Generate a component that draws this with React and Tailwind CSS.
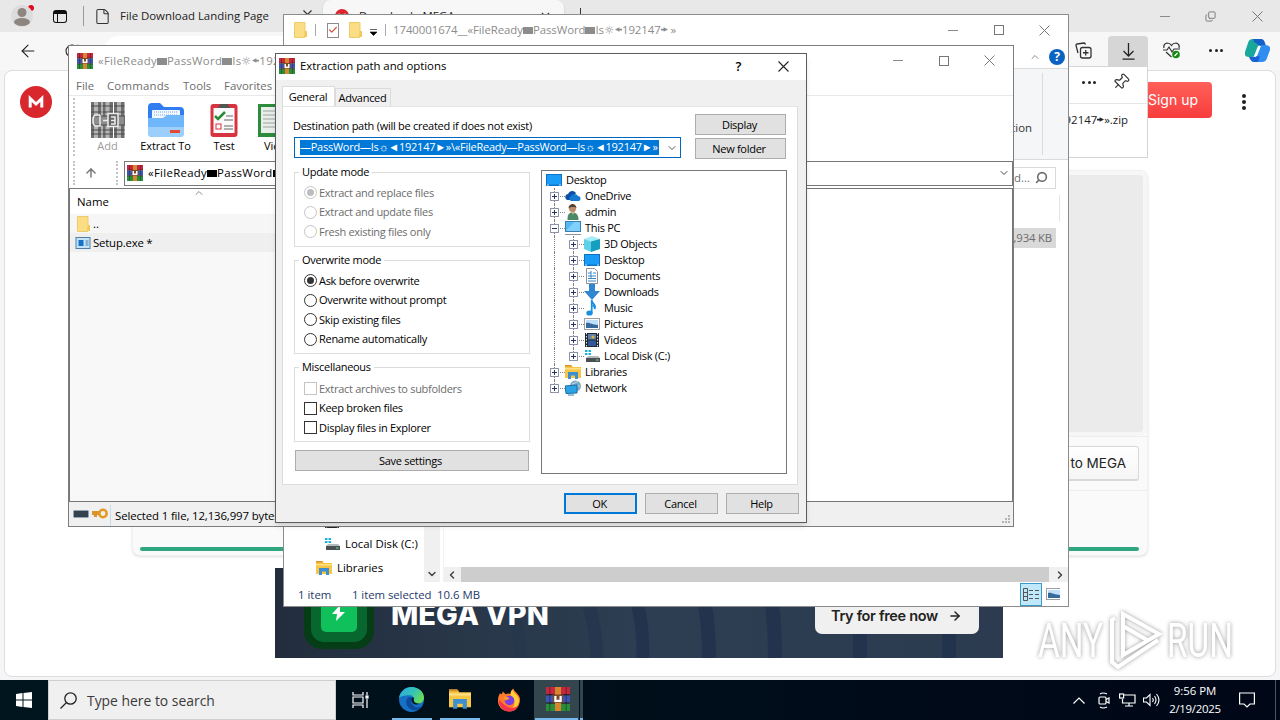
import {
  ArrowLeft, ArrowRight, ArrowUp, Check, ChevronDown, ChevronLeft, ChevronRight, ChevronUp,
  Copy, File, Pin, RotateCw, Search, X,
} from 'lucide-react';

const MENU = [
  { label: 'File', cls: 'w-[31px]' },
  { label: 'Commands', cls: 'w-[76px] tracking-[0.2px]' },
  { label: 'Tools', cls: 'w-[41px]' },
  { label: 'Favorites', cls: 'w-[60px]' },
];

const UPDATE = ['Extract and replace files', 'Extract and update files', 'Fresh existing files only'];
const OVERWRITE = ['Ask before overwrite', 'Overwrite without prompt', 'Skip existing files', 'Rename automatically'];
const MISC = ['Extract archives to subfolders', 'Keep broken files', 'Display files in Explorer'];

const TREE = [
  { label: 'Desktop', level: 0, icon: DesktopIcon },
  { label: 'OneDrive', level: 1, icon: CloudIcon },
  { label: 'admin', level: 1, icon: UserIcon },
  { label: 'This PC', level: 1, icon: PcIcon, open: true },
  { label: '3D Objects', level: 2, icon: CubeIcon },
  { label: 'Desktop', level: 2, icon: DesktopIcon },
  { label: 'Documents', level: 2, icon: DocumentIcon },
  { label: 'Downloads', level: 2, icon: DownloadIcon },
  { label: 'Music', level: 2, icon: MusicIcon },
  { label: 'Pictures', level: 2, icon: PictureIcon },
  { label: 'Videos', level: 2, icon: VideoIcon },
  { label: 'Local Disk (C:)', level: 2, icon: DiskIcon, last: true },
  { label: 'Libraries', level: 1, icon: LibraryIcon },
  { label: 'Network', level: 1, icon: NetworkIcon, last: true },
];

/* ---------- icons ---------- */

function DesktopIcon() {
  return (
    <svg width="16" height="16" viewBox="0 0 16 16">
      <rect x="0" y="2" width="16" height="12" fill="#0b74c9" />
      <rect x="1" y="3" width="14" height="9.500" fill="#1a9bf5" />
      <path d="M1 13h2M13 13h2" stroke="#bfe3ff" />
    </svg>
  );
}

function CloudIcon() {
  return (
    <svg width="16" height="16" viewBox="0 0 16 16">
      <path d="M1 11a3 3 0 0 1 2-5 4.500 4.500 0 0 1 8-1l-5 7H2z" fill="#0a4fa5" />
      <path d="M6 13a2.700 2.700 0 0 1 0-5 4 4 0 0 1 7 0 2.600 2.600 0 0 1 1 5z" fill="#1479d0" />
    </svg>
  );
}

function UserIcon() {
  return (
    <svg width="16" height="16" viewBox="0 0 16 16">
      <path d="M2.500 16c0-5 1-7.500 5-7.500s6 2.500 6 7.500z" fill="#4c8a67" />
      <path d="M6 7h4l-2 4z" fill="#d9b08c" />
      <circle cx="7.500" cy="4.500" r="3.500" fill="#b98b6a" />
      <path d="M3.500 4.500c0-6 8-6 8 0L10 3H6z" fill="#54402f" />
    </svg>
  );
}

function PcIcon() {
  return (
    <svg width="16" height="16" viewBox="0 0 16 16">
      <rect x="0.500" y="1.500" width="15" height="10" fill="#57b7f2" stroke="#3c7fae" />
      <path d="M1 11L9 2h6v9z" fill="#7fd0fb" />
      <path d="M0 14.500h16" stroke="#8b949c" />
    </svg>
  );
}

function CubeIcon() {
  return (
    <svg width="16" height="16" viewBox="0 0 16 16">
      <path d="M0 3l8-3 8 3-8 3z" fill="#a6ecf7" />
      <path d="M0 3l7 2.500V16l-7-3z" fill="#5fd0e6" />
      <path d="M7 5.500L16 3v10l-9 3z" fill="#159fbe" />
    </svg>
  );
}

function DocumentIcon() {
  return (
    <svg width="16" height="16" viewBox="0 0 16 16">
      <path d="M2.500 0.500h8l3 3v12h-11z" fill="#fff" stroke="#8d9499" />
      <path d="M4 5h3M9 5h3M4 8h8M4 10.500h8M4 13h8M7 3v8" stroke="#3489c9" />
    </svg>
  );
}

function DownloadIcon() {
  return (
    <svg width="16" height="16" viewBox="0 0 16 16">
      <path d="M5 0h6v7h5l-8 9-8-9h5z" fill="#2f86d3" />
    </svg>
  );
}

function MusicIcon() {
  return (
    <svg width="16" height="16" viewBox="0 0 16 16">
      <ellipse cx="5.500" cy="13" rx="3.200" ry="2.600" fill="#158fe0" />
      <path d="M7.700 13V0c0 4 5 4 3 9 0-3-2-3.500-2-3.500" fill="none" stroke="#158fe0" strokeWidth="1.700" />
    </svg>
  );
}

function PictureIcon() {
  return (
    <svg width="16" height="16" viewBox="0 0 16 16">
      <rect x="0.500" y="2.500" width="15" height="11" fill="#fff" stroke="#9aa0a5" />
      <rect x="2" y="4" width="12" height="8" fill="#bfe0fa" />
      <path d="M2 7c3-1 6 2 12 2v3H2z" fill="#37699a" />
    </svg>
  );
}

function VideoIcon() {
  return (
    <svg width="16" height="16" viewBox="0 0 16 16">
      <rect x="1" y="1" width="14" height="14" fill="#23282d" />
      <rect x="4" y="2" width="8" height="5.500" fill="#5f7fae" />
      <rect x="4" y="8.500" width="8" height="5.500" fill="#31589a" />
      <circle cx="9" cy="5" r="1.600" fill="#d9b53a" />
      <path d="M2.500 1v14M13.500 1v14" stroke="#e6e9ec" strokeDasharray="1.500 1.500" />
    </svg>
  );
}

function DiskIcon() {
  return (
    <svg width="16" height="16" viewBox="0 0 16 16">
      <path d="M1 2h2.500v2H1zM4.500 2H7v2H4.500zM1 5h2.500v2H1zM4.500 5H7v2H4.500z" fill="#19b3d8" />
      <path d="M2 10l2-2h10l2 2z" fill="#b4b9bc" />
      <rect x="2" y="10" width="14" height="4" fill="#4a5054" />
      <rect x="12" y="11.500" width="2.500" height="1" fill="#6fe089" />
    </svg>
  );
}

function LibraryIcon({ size = 16 }) {
  return (
    <svg width={size} height={size} viewBox="0 0 16 16">
      <path d="M0 1h6l1.500 2H16v11H0z" fill="#f6c644" />
      <path d="M0 1h6l1.500 1.500H0z" fill="#d9912a" />
      <path d="M0 4h16v1.500H0z" fill="#ffdf86" />
      <path d="M3 8h10v7h-3v-3.500H6V15H3z" fill="#3d8fd1" />
    </svg>
  );
}

function NetworkIcon() {
  return (
    <svg width="16" height="16" viewBox="0 0 16 16">
      <circle cx="10.500" cy="6" r="5.500" fill="#7aa9c4" />
      <path d="M7 4c3 0 4-3 6-2M9 8c3 0 3-3 6-2" stroke="#c9e2ef" fill="none" />
      <path d="M0 6l12-1v8L1 13.500z" fill="#29a3e6" stroke="#1b6fa6" />
      <path d="M3 15h6" stroke="#2b7fb5" />
    </svg>
  );
}

function RarIcon({ size = 16 }) {
  return (
    <svg width={size} height={size} viewBox="0 0 16 16">
      <rect x="0" y="0" width="16" height="5" fill="#c2283f" />
      <rect x="0" y="5.500" width="16" height="5" fill="#3b56b5" />
      <rect x="0" y="11" width="16" height="5" fill="#2b8c3c" />
      <path d="M0 5.200h16M0 10.700h16" stroke="#2b1a1a" strokeWidth="0.700" />
      <path d="M2.500 0v16M13.500 0v16" stroke="#000" strokeOpacity="0.250" />
      <rect x="6" y="0" width="4" height="16" fill="#d8862b" />
      <rect x="4.500" y="5" width="7" height="5.500" fill="#7a4a2a" />
      <path d="M5.500 10V6h1.500v2.500h2V6h1.500v4z" fill="#fff" />
    </svg>
  );
}

function FolderIcon() {
  return (
    <svg width="14" height="16" viewBox="0 0 14 16">
      <path d="M0.500 0.500h10.500v13.500l-0.500 1.500H0.500z" fill="#fbdd85" stroke="#eccb69" />
      <path d="M11 9h2v6h-3z" fill="#f3ca5a" />
    </svg>
  );
}

function BooksIcon() {
  return (
    <svg width="34" height="36" viewBox="0 0 34 36">
      {[0, 11.500, 23].map((x) => (
        <g key={x}>
          <rect x={x} y="0" width="10.500" height="36" fill="#6f6f6f" />
          <rect x={x + 3} y="0" width="4" height="36" fill="#b5b5b5" />
          <path d={`M${x} 4h10.500M${x} 10h10.500M${x} 28h10.500M${x} 32h10.500`} stroke="#4a4a4a" />
        </g>
      ))}
      <rect x="0" y="14" width="34" height="9" fill="#8d8d8d" stroke="#4d4d4d" />
      <rect x="17" y="11.500" width="10" height="13" fill="#666" stroke="#ededed" strokeWidth="1.500" />
      <path d="M9 13H5q-3 0-3 5.500T5 24h4V13M12 18.500h5M20 15h4v7h-4M20 18.500h4" fill="none" stroke="#ededed" strokeWidth="1.500" />
    </svg>
  );
}

function BlueFolderIcon() {
  return (
    <svg width="36" height="36" viewBox="0 0 36 36">
      <path d="M0 5q0-4 4-4h8l4 4h16q4 0 4 4v20H0z" fill="#2f7df0" />
      <rect x="4" y="8" width="28" height="14" rx="1" fill="#f2f8ff" />
      <path d="M6 10h24M6 13h24" stroke="#7aa7d8" strokeDasharray="1 1" />
      <path d="M0 16h15l4-3h17v18q0 4-4 4H4q-4 0-4-4z" fill="#6fb7fa" />
      <path d="M0 25h36v6q0 4-4 4H4q-4 0-4-4z" fill="#9ccffc" />
      <rect x="22" y="28" width="10" height="3" fill="#e24a34" />
    </svg>
  );
}

function TestIcon() {
  return (
    <svg width="28" height="36" viewBox="0 0 28 36">
      <rect x="0.500" y="2" width="27" height="33" rx="3" fill="#d8333f" />
      <rect x="3.500" y="6" width="21" height="25" fill="#fafafa" />
      <path d="M8 6l2-4h8l2 4z" fill="#555" />
      <path d="M5 14l3 3 7-7" fill="none" stroke="#2b8a36" strokeWidth="2.500" />
      <path d="M16 14h7M14 18h9M14 24h9M14 27h9" stroke="#666" />
      <rect x="6" y="22" width="5" height="5" fill="none" stroke="#d8333f" />
    </svg>
  );
}

function ViewIcon() {
  return (
    <svg width="36" height="36" viewBox="0 0 36 36">
      <path d="M0 2h36v33H0z" fill="#2c8c3c" />
      <path d="M3 5h30v26H3z" fill="#e9eeea" />
      <path d="M5 9h26M5 13h26M5 17h26M5 21h26M5 25h26" stroke="#9aa39c" />
    </svg>
  );
}

function EdgeIcon() {
  return (
    <svg width="25" height="25" viewBox="0 0 24 24">
      <defs>
        <linearGradient id="edgeTop" x1="0" y1="0" x2="1" y2="0.500">
          <stop offset="0" stopColor="#2aa7e6" />
          <stop offset="0.600" stopColor="#35c4b4" />
          <stop offset="1" stopColor="#67dc5a" />
        </linearGradient>
      </defs>
      <circle cx="12" cy="12" r="12" fill="#1670c4" />
      <path d="M0 11C1 4 6 0 12 0c7 0 12 5 12 10 0 4-3 6-6 6s-5-1-4-3c1-3-1-5-4-5C5 8 1 9 0 11z" fill="url(#edgeTop)" />
      <path d="M9 10c-4 3-2 10 4 12 4 1 8-1 10-4-3 2-7 2-9 0s-3-3-2-5c1-3-1-4-3-3z" fill="#0d4a9c" />
      <path d="M12 12c0 4 4 6 8 4-3 0-6-1-6-4 1-3-2-3-2 0z" fill="#03141c" />
    </svg>
  );
}

function FirefoxIcon() {
  return (
    <svg width="23" height="24" viewBox="0 0 24 24">
      <path d="M2 5l2 1 1-3 3 3c2-1 4-1 5 0 0-3 1-4 3-6 1 4 6 5 7 11 0 7-4 13-11 13S0 19 0 13c0-4 1-6 2-8z" fill="#ff7a2b" />
      <path d="M15 1c1 4 7 6 7 12-1 5-4 8-8 9 5-5 4-12-1-15 0-3 1-4 2-6z" fill="#ffcf3a" />
      <path d="M1 12c0 7 5 12 11 12 5 0 8-3 9-6-4 3-9 3-13 0S2 12 1 12z" fill="#f5344f" />
      <circle cx="12" cy="12.500" r="5" fill="#7a3fe0" />
      <path d="M6 9c3-1 5 0 6 2-2 0-3 2-5 1z" fill="#ff9a2e" />
    </svg>
  );
}

function CopilotIcon() {
  return (
    <svg width="25" height="23" viewBox="0 0 25 23">
      <path d="M8 0h8l-5 15q-1 3-4 3H4q-5 0-4-5L3 4q1-4 5-4z" fill="#18a89b" />
      <path d="M8 0h8q3 0 4 4l1 3h-6L9 3z" fill="#1560c8" />
      <path d="M17 6h3q6 0 5 5l-3 8q-1 4-5 4H9l5-13q1-4 3-4z" fill="#2f8df2" />
      <path d="M4 18h6l5-1-2 6H9q-3 0-5-5z" fill="#1b5fd6" />
      <path d="M13 7l3 0-4 10-3 0z" fill="#fff" />
    </svg>
  );
}

function MegaIcon({ size }) {
  return (
    <svg width={size} height={size} viewBox="0 0 32 32" className="shrink-0">
      <circle cx="16" cy="16" r="16" fill="#d9272e" />
      <path d="M10.200 21.500v-9l5.800 5.500 5.800-5.500v9" fill="none" stroke="#fff" strokeWidth="3" />
    </svg>
  );
}

/* ---------- small shared parts ---------- */

function WindowButtons({ className }) {
  return (
    <div className={`flex items-center ${className}`}>
      <span className="w-[10px] h-px bg-[#8a8a8a]" />
      <span className="w-[10px] h-[10px] border border-[#777] ml-[36px]" />
      <svg width="11" height="11" viewBox="0 0 11 11" className="ml-[35px]">
        <path d="M0.500 0.500l10 10M10.500 0.500l-10 10" stroke="#777" />
      </svg>
    </div>
  );
}

function Dots({ vertical }) {
  return (
    <span className={`flex justify-between items-center ${vertical ? 'flex-col h-[16px]' : 'w-[14px]'}`}>
      {[0, 1, 2].map((i) => (
        <span key={i} className={`rounded-full bg-[#222] ${vertical ? 'w-1 h-1' : 'w-[3px] h-[3px]'}`} />
      ))}
    </span>
  );
}

function PushButton({ children, className }) {
  return (
    <button className={`h-[21px] bg-[#e1e1e1] flex items-center justify-center ${className}`}>{children}</button>
  );
}

// box and arrow glyphs of the archive name
function Block() {
  return <span className="inline-block w-[10px] h-[7px] bg-current" />;
}

function Arrow({ flip }) {
  return (
    <svg width="7" height="5" viewBox="0 0 8 5" className={`inline-block align-[2px] fill-current ${flip ? '-scale-x-100' : ''}`}>
      <path d="M0 2.500L5 0v1.500h3v2H5V5z" />
    </svg>
  );
}

function Sun() {
  return <span className="inline-block w-[11px] text-center -indent-px">☼</span>;
}

/* ---------- browser ---------- */

function Browser() {
  return (
    <div className="absolute inset-x-0 top-0 h-[680px] bg-[#f5f5f7] flex flex-col">
      <div className="h-8 bg-[#e8e8e8] flex items-center shrink-0">
        <div className="relative w-[22px] h-[22px] ml-[11px] rounded-full bg-[#dcdcdc] overflow-hidden">
          <svg width="22" height="22" viewBox="0 0 22 22">
            <circle cx="11" cy="7.500" r="4.500" fill="#8c8580" />
            <ellipse cx="11" cy="17" rx="8" ry="4" fill="#8c8580" />
          </svg>
        </div>
        <span className="w-[6px] h-[6px] rounded-full bg-[#e00b1c] -ml-[5px] -mt-4" />
        <div className="w-[14px] h-[13px] ml-[19px] border-[1.500px] border-t-4 border-[#111] rounded-[3px] flex">
          <span className="w-1 border-r border-[#111]" />
        </div>
        <span className="w-px h-5 bg-[#999] ml-4" />
        <File className="w-[17px] h-[17px] ml-[10px] text-[#333]" strokeWidth={1.5} />
        <span className="ml-[9px] w-[178px] text-[#222] whitespace-nowrap">File Download Landing Page</span>
        <X className="w-[15px] h-[15px] ml-[2px] mb-1 text-[#333]" strokeWidth={1.800} />
        <div className="h-8 w-[241px] ml-2 px-3 bg-[#f7f7f7] rounded-t-lg flex items-center shadow-sm">
          <MegaIcon size={14} />
          <span className="ml-[10px] flex-1 text-[#222]">Download - MEGA</span>
          <X className="w-[13px] h-[13px] text-[#333]" strokeWidth={2} />
        </div>
        <span className="w-px h-4 bg-[#333] ml-4" />
        <div className="ml-auto mr-[17px] flex items-center">
          <span className="w-[10px] h-px bg-[#8a8a8a]" />
          <Copy className="w-[11px] h-[11px] ml-[35px] -scale-x-100 rotate-180 text-[#777]" strokeWidth={2} />
          <svg width="11" height="11" viewBox="0 0 11 11" className="ml-[36px]">
            <path d="M0.500 0.500l10 10M10.500 0.500l-10 10" stroke="#777" />
          </svg>
        </div>
      </div>

      <div className="h-[38px] pb-px bg-[#f7f7f7] flex items-center shrink-0">
        <ArrowLeft className="w-5 h-5 ml-[18px] text-[#222]" strokeWidth={1.300} />
        <RotateCw className="w-4 h-4 ml-[26px] text-[#222]" strokeWidth={1.600} />
        <div className="h-[30px] w-[920px] ml-[24px] rounded-full bg-white pl-[18px] flex items-center">
          <Search className="w-3 h-3 text-[#555]" />
        </div>
        <div className="ml-auto flex items-center h-full pr-[10px]">
          <svg width="17" height="17" viewBox="0 0 17 17" fill="none" stroke="#333" strokeWidth="1.300">
            <path d="M3 11L1 3.500Q1 2 2 2l7-1q1 0 1.500 1.500" />
            <rect x="5.500" y="5.500" width="10.500" height="10.500" rx="2" />
            <path d="M10.750 8v5.500M8 10.750h5.500" />
          </svg>
          <div className="w-10 h-[30px] ml-4 mt-px bg-[#d6d6d6] rounded-t-[4px] flex items-center justify-center">
            <svg width="13" height="17" viewBox="0 0 13 17" fill="none" stroke="#222" strokeWidth="1.300">
              <path d="M6.500 0v13M1.500 8l5 5 5-5M0.500 16.200h12" />
            </svg>
          </div>
          <svg width="18" height="17" viewBox="0 0 18 17" fill="none" stroke="#333" strokeWidth="1.200" className="ml-[15px]">
            <path d="M1 6Q0 2 4 1q3 0 4.500 2.500Q10 1 13 1q4 1 3 5M3 10l5.500 5M0 8h4l2-3 3 5 2-3h6" />
            <circle cx="13" cy="12.500" r="3.800" fill="#138a13" stroke="none" />
            <path d="M11.500 14l3-3" stroke="#fff" />
          </svg>
          <span className="ml-[28px]"><Dots /></span>
          <span className="ml-[22px]"><CopilotIcon /></span>
        </div>
      </div>

      <main className="mx-1 h-[607px] bg-white border border-[#dedede] rounded-[8px] overflow-hidden">
        <header className="h-[62px] pl-[15px] pr-[29px] flex items-center">
          <MegaIcon size={32} />
          <button className="ml-auto w-[110px] h-9 mb-1 rounded-[4px] bg-gradient-to-b from-[#ff5f5a] to-[#f73c3c] text-white text-[14px] font-['Inter',sans-serif] text-right pr-[14px]">
            Sign up
          </button>
          <span className="ml-[30px]"><Dots vertical /></span>
        </header>

        {/* transfer card */}
        <section className="mt-[37px] ml-[127px] w-[1016px] h-[386px] rounded-[8px] border border-[#f1f1f1] bg-[#fafafa] flex flex-col shadow-sm">
          <div className="h-[265px] rounded-[8px] border-4 border-[#f6f6f6] bg-[#ebebeb]" />
          <div className="h-[55px] pb-px flex items-center justify-end pr-2 border-y border-[#eeeeee]">
            <button className="w-[140px] h-[35px] rounded-[3px] border border-[#d8d8d8] border-b-2 bg-gradient-to-b from-white to-[#f5f5f5] text-[#222] text-[13.500px] font-['Inter',sans-serif] text-right pr-3">
              Save to MEGA
            </button>
          </div>
          <div className="mt-auto mb-1 ml-[7px] mr-2 h-1 rounded-full bg-[#2fa67f]" />
        </section>

        {/* VPN banner */}
        <section className="mt-[12px] ml-[270px] w-[728px] h-[90px] bg-gradient-to-r from-[#222e3e] via-[#2d3e52] to-[#2c3b50] flex items-center relative overflow-hidden">
          <svg className="absolute inset-0" width="728" height="90" viewBox="0 0 728 90">
            <g stroke="#22344d" fill="none">
              <path d="M236 38q8 22 10 52" strokeWidth="12" strokeOpacity="0.400" />
              <path d="M314 38q7 22 8 52" strokeWidth="13" strokeOpacity="0.700" />
              <path d="M363 38q5 20 5 52" strokeWidth="13" />
              <path d="M430 38q4 20 4 52M497 38q3 20 3 52" strokeWidth="14" />
              <path d="M585 38v52M674 38v52" strokeWidth="14" />
            </g>
          </svg>
          <div className="relative ml-[29px] w-[70px] h-[72px] rounded-[18px] bg-[#053d17] flex items-center justify-center">
            <div className="w-[56px] h-[58px] rounded-[13px] bg-[#08662f] flex items-center justify-center">
              <div className="w-9 h-[38px] rounded-[5px] bg-[#0fc05b] flex items-center justify-center">
                <svg width="14" height="16" viewBox="0 0 14 16">
                  <path d="M8 0L0 9h5l-1 7 9-9H8z" fill="#fff" />
                </svg>
              </div>
            </div>
          </div>
          <span className="relative mt-[3px] ml-[17px] text-[29px] leading-[16px] font-extrabold text-white font-['Inter',sans-serif] whitespace-nowrap">
            MEGA VPN
          </span>
          <div className="absolute right-6 top-[28px] w-[164px] h-[38px] rounded-[7px] bg-[#f0f0f0] flex items-center pl-4 pt-[2px] text-[14.500px] tracking-[-0.320px] font-semibold text-[#222] font-['Inter',sans-serif] whitespace-nowrap">
            Try for free now
            <ArrowRight className="w-[14px] h-[14px] ml-[10px]" strokeWidth={2.500} />
          </div>
        </section>
      </main>

      {/* downloads flyout */}
      <div className="absolute left-[780px] top-[66px] w-[368px] h-[92px] bg-white border border-[#d5d5d5] flex flex-col">
        <div className="h-[37px] pb-[6px] border-b border-[#e5e5e5] flex items-center justify-end pr-[17px]">
          <Dots />
          <Pin className="w-[18px] h-[18px] ml-[16px] rotate-45 text-[#333]" strokeWidth={1.600} />
        </div>
        <div className="h-8 pr-[19px] flex items-center justify-end text-[#222]">
          <span>Is☼192147<Arrow flip />».zip</span>
        </div>
      </div>
    </div>
  );
}

/* ---------- file explorer ---------- */

function Explorer() {
  return (
    <div className="absolute left-[283px] top-[14px] w-[786px] h-[593px] bg-white border border-[#8c8c8c] flex flex-col">
      <div className="h-[30px] flex items-center shrink-0">
        <span className="ml-[10px]"><FolderIcon /></span>
        <span className="w-px h-3 bg-[#aaa] ml-[7px]" />
        <span className="ml-[11px] w-3 h-[15px] border border-[#8b8b8b] flex items-center justify-center">
          <Check className="w-[10px] h-[10px] text-[#d5573f]" strokeWidth={3} />
        </span>
        <span className="ml-[10px]"><FolderIcon /></span>
        <svg width="7" height="7" viewBox="0 0 7 7" className="ml-[7px] mt-1">
          <path d="M0 0.500h7M0 3h7L3.500 6.500z" stroke="#000" strokeWidth="0.600" />
        </svg>
        <span className="w-px h-3 bg-[#aaa] ml-[8px]" />
        <span className="ml-[7px] w-[290px] text-[#8c8c8c] tracking-[-0.060px] whitespace-nowrap">
          1740001674__«FileReady<Block />PassWord<Block />Is<Sun /><Arrow />192147<Arrow flip /> »
        </span>
        <WindowButtons className="ml-auto mr-[18px]" />
      </div>

      <div className="h-[23px] flex items-center shrink-0">
        <span className="h-full w-14 bg-[#1979ca]" />
        <ChevronUp className="w-3 h-3 ml-auto text-[#8a8a8a]" />
        <span className="ml-[8px] mr-[3px] w-4 h-4 rounded-full bg-[#0a63c2] text-white text-[12px] font-bold leading-4 text-center">?</span>
      </div>

      <div className="h-[92px] bg-[#f5f6f7] border-y border-[#dadbdc] flex shrink-0">
        <span className="ml-auto mt-[51px] mr-[10px] text-[#333]">Select selection</span>
        <span className="w-px my-1 mr-[25px] bg-[#dadbdc]" />
      </div>

      <div className="h-[35px] flex items-center justify-end shrink-0 pr-3">
        <div className="w-[220px] h-[22px] border border-[#d9d9d9] flex items-center justify-end pr-[7px] text-[#6d6d6d]">
          Search Download...
          <Search className="w-[13px] h-[13px] ml-[5px] -scale-x-100" strokeWidth={3} />
        </div>
      </div>

      <div className="flex-1 flex min-h-0 pb-px">
        <nav className="w-[140px] flex flex-col justify-end pb-[2px] whitespace-nowrap">
          <div className="h-6 pl-10 pt-[2px] flex items-center gap-[5px]"><VideoIcon /></div>
          <div className="h-6 pl-10 flex items-center gap-[5px]"><DiskIcon />Local Disk (C:)</div>
          <div className="h-6 pl-8 flex items-center gap-[5px]"><LibraryIcon />Libraries</div>
        </nav>
        <div className="w-4 bg-[#f0f0f0] flex items-end justify-center pb-[2px]">
          <ChevronDown className="w-3 h-3 -ml-px text-[#444]" strokeWidth={3} />
        </div>
        <div className="ml-[3px] flex-1 flex flex-col border-l border-[#f3f3f3]">
          <div className="h-[27px] flex justify-end pr-2">
            <span className="w-px bg-[#e5e5e5]" />
          </div>
          <div className="mt-[6px] mr-3 h-5 bg-[#d9d9d9] flex items-center justify-end pr-1 text-[#6d6d6d] tracking-[-0.200px]">10,934 KB</div>
          <div className="mt-auto h-[15px] bg-[#f0f0f0] flex items-center">
            <ChevronLeft className="w-3 h-3 ml-[2px] mr-[3px] text-[#444]" strokeWidth={3} />
            <span className="h-full flex-1 bg-[#cdcdcd]" />
            <ChevronRight className="w-3 h-3 ml-[5px] mr-[2px] text-[#444]" strokeWidth={3} />
          </div>
        </div>
      </div>

      <div className="h-[23px] shrink-0 pl-[14px] flex items-center leading-[12px] text-[#1e3a6b]">
        <span className="w-[54px]">1 item</span>
        <span className="w-[85px] whitespace-nowrap tracking-[-0.060px]">1 item selected</span>
        <span>10.6 MB</span>
        <div className="ml-auto w-[22px] h-[23px] bg-[#bfe8fb] border border-[#3a9bc9] flex items-center justify-center">
          <svg width="16" height="13" viewBox="0 0 16 13" stroke="#555" fill="none">
            <path d="M0.500 0.500h4v12h-4zM0.500 4.500h4M0.500 8.500h4M6 2.500h4M6 6.500h4M6 10.500h4M12 2.500h4M12 6.500h4M12 10.500h4" />
          </svg>
        </div>
        <span className="ml-1 mr-2 mb-[2px] w-[14px] overflow-hidden"><PictureIcon /></span>
      </div>
    </div>
  );
}

/* ---------- WinRAR ---------- */

function WinRar() {
  return (
    <div className="absolute left-[68px] top-[45px] w-[946px] h-[482px] bg-white border border-[#7d7d7d] flex flex-col">
      <div className="h-[29px] flex items-center shrink-0">
        <span className="ml-[8px]"><RarIcon /></span>
        <span className="ml-[5px] text-[#8c8c8c] tracking-[0.280px] whitespace-nowrap">
          «FileReady<Block />PassWord<Block />Is<Sun /><Arrow />192
        </span>
        <WindowButtons className="ml-auto mr-[18px]" />
      </div>
      <div className="h-[21px] pl-[7px] pt-px flex items-center text-[#6d6d6d] border-b border-[#e9e9e9] shrink-0">
        {MENU.map(({ label, cls }) => (
          <span key={label} className={cls}>{label}</span>
        ))}
      </div>

      <div className="h-[62px] pl-1 pt-[6px] flex shrink-0">
        <span className="border-l-2 border-dotted border-[#c4c4c4] -mt-1 h-[58px]" />
        <Tool label="Add" icon={BooksIcon} className="w-[65px] text-[#9b9b9b]" />
        <Tool label="Extract To" icon={BlueFolderIcon} className="w-[51px]" />
        <Tool label="Test" icon={TestIcon} className="w-[66px]" />
        <Tool label="View" icon={ViewIcon} className="w-[38px]" />
      </div>

      <div className="h-[30px] pl-1 flex items-center shrink-0">
        <span className="border-l-2 border-dotted border-[#c4c4c4] h-6" />
        <ArrowUp className="w-[14px] h-[14px] ml-[9px] text-[#777]" strokeWidth={2.500} />
        <span className="border-l-2 border-dotted border-[#c4c4c4] h-6 ml-[18px]" />
        <div className="ml-[6px] flex-1 h-[25px] border border-[#777] flex items-center pl-[2px] pr-[2px]">
          <RarIcon />
          <span className="ml-[5px] flex-1 tracking-[0.300px] whitespace-nowrap">«FileReady<Block />PassWord<Block /></span>
          <ChevronDown className="w-3 h-3 text-[#444]" />
        </div>
      </div>

      <div className="flex-1 border border-[#777] flex">
        <div className="w-[262px] bg-[#f8f8f8]">
          <div className="h-[25px] bg-white pl-[7px] flex flex-col relative">
            <ChevronUp className="w-3 h-3 absolute left-[123px] -top-[2px] text-[#666]" strokeWidth={1.500} />
            <span className="mt-[5px] text-[11.400px]">Name</span>
          </div>
          <div className="h-[19px] pl-[7px] flex items-center bg-[#f6f6f6]"><FolderIcon /><span className="ml-[2px]">..</span></div>
          <div className="h-[19px] pl-[5px] flex items-center bg-[#efefef]">
            <svg width="16" height="12" viewBox="0 0 15 12">
              <rect x="0.500" y="0.500" width="14" height="11" fill="#c4e3f7" stroke="#4e7fa8" />
              <rect x="3" y="3" width="5" height="6" fill="#1273c9" />
              <path d="M10 4h3M10 6h3M10 8h3" stroke="#4e7fa8" />
            </svg>
            <span className="ml-[2px] tracking-[-0.200px]">Setup.exe *</span>
          </div>
        </div>
      </div>

      <div className="h-6 bg-[#f0f0f0] flex items-center pl-1 pt-[3px] shrink-0">
        <svg width="16" height="8" viewBox="0 0 16 8" className="-mt-1">
          <rect x="0.500" y="0.500" width="15" height="7" rx="1" fill="#35434e" stroke="#93a3af" />
        </svg>
        <svg width="16" height="11" viewBox="0 0 16 11" className="ml-[3px] -mt-1">
          <path d="M0 3h8v4H5v2H2V7H0z" fill="#d9952c" />
          <circle cx="11" cy="5.500" r="3.700" fill="none" stroke="#e39a22" strokeWidth="2.500" />
        </svg>
        <span className="w-px h-[21px] bg-[#c9dbe8] ml-[2px]" />
        <span className="ml-[4px] whitespace-nowrap tracking-[-0.120px]">Selected 1 file, 12,136,997 bytes</span>
        <svg width="9" height="9" viewBox="0 0 9 9" className="ml-auto mr-[2px] mt-2 fill-[#b5b5b5]">
          <path d="M6 0h2v2H6zM3 3h2v2H3zM6 3h2v2H6zM0 6h2v2H0zM3 6h2v2H3zM6 6h2v2H6z" />
        </svg>
      </div>
    </div>
  );
}

function Tool({ label, icon: Icon, className }) {
  return (
    <div className={`flex flex-col items-center shrink-0 whitespace-nowrap ${className}`}>
      <Icon />
      <span className="leading-4 text-[11px] tracking-[-0.050px]">{label}</span>
    </div>
  );
}

/* ---------- extraction dialog ---------- */

function Group({ title, className, children }) {
  return (
    <fieldset className={`border border-[#dcdcdc] w-[236px] pl-[9px] ${className}`}>
      <legend className="-ml-[5px] px-[3px] leading-[14px]">{title}</legend>
      {children}
    </fieldset>
  );
}

function Option({ label, type, checked, disabled }) {
  return (
    <label className={`h-[19.500px] flex items-center ${disabled ? 'text-[#6d6d6d]' : 'text-black'}`}>
      <span
        className={`w-[13px] h-[13px] border bg-white flex items-center justify-center mr-[2px] ${
          type === 'radio' ? 'rounded-full' : ''
        } ${disabled ? 'border-[#c4c4c4]' : 'border-[#333]'}`}
      >
        {checked && <span className={`w-[7px] h-[7px] rounded-full ${disabled ? 'bg-[#bdbdbd]' : 'bg-[#333]'}`} />}
      </span>
      {label}
    </label>
  );
}

function Gutter({ line, half, expander, open }) {
  return (
    <span className="relative w-[19px] h-4 flex items-center justify-center shrink-0">
      {line && <span className={`absolute left-[9px] top-0 border-l border-dotted border-[#808080] ${half ? 'h-2' : 'h-4'}`} />}
      {expander && <span className="absolute left-[10px] top-2 w-[10px] border-t border-dotted border-[#808080]" />}
      {expander && (
        <svg width="9" height="9" viewBox="0 0 9 9" className="relative">
          <rect x="0.500" y="0.500" width="8" height="8" fill="#fff" stroke="#8f93a8" />
          <path d={open ? 'M2 4.500h5' : 'M2 4.500h5M4.500 2v5'} stroke="#27345f" />
        </svg>
      )}
    </span>
  );
}

function TreeRow({ label, level, icon: Icon, open, last }) {
  return (
    <div className="h-4 pl-[3px] flex items-center whitespace-nowrap">
      {level === 1 && <Gutter line half={last} expander open={open} />}
      {level === 2 && <Gutter line />}
      {level === 2 && <Gutter line half={last} expander />}
      <span className="ml-px mr-1"><Icon /></span>
      {label}
    </div>
  );
}

function ExtractDialog() {
  return (
    <div className="absolute left-[275px] top-[53px] w-[532px] h-[470px] bg-[#f0f0f0] border border-[#5c5c5c] flex flex-col shadow-md font-['Open_Sans',sans-serif] text-[11px] tracking-[-0.290px] text-black">
      <div className="h-[26px] pb-[2px] bg-white flex items-center shrink-0 pl-[3px] pr-[17px]">
        <RarIcon />
        <span className="ml-[5px] text-[11.400px] tracking-[-0.030px]">Extraction path and options</span>
        <span className="ml-auto text-[13px] font-semibold">?</span>
        <svg width="11" height="11" viewBox="0 0 11 11" className="ml-[37px]">
          <path d="M0.500 0.500l10 10M10.500 0.500l-10 10" stroke="#222" strokeWidth="1.100" />
        </svg>
      </div>

      <div className="flex items-end h-[27px] pl-[6px] shrink-0">
        <div className="w-[53px] h-[21px] pb-px pr-px bg-white border border-b-0 border-[#dcdcdc] flex items-center justify-center">General</div>
        <div className="w-[56px] h-[19px] pr-px border border-b-0 border-[#dcdcdc] flex items-center justify-center">Advanced</div>
      </div>

      <div className="-mt-px ml-[6px] w-[516px] h-[379px] bg-white border border-[#dcdcdc] border-t-[#e4e4e4] pl-[11px] pt-[7px] shrink-0">
        <div className="flex">
          <div className="w-[387px]">
            <div className="h-[23px] -ml-px flex items-center tracking-[-0.270px]">Destination path (will be created if does not exist)</div>
            <div className="h-[21px] border border-[#0067c0] pl-[5px] pr-[2px] flex items-center">
              <span className="h-[15px] w-[359px] bg-[#0078d7] text-white leading-[14px] tracking-[-0.250px] whitespace-nowrap overflow-hidden">
                —PassWord—Is☼◄192147►»\«FileReady—PassWord—Is☼◄192147►»
              </span>
              <ChevronDown className="w-3 h-3 ml-auto text-[#444]" strokeWidth={1.800} />
            </div>
          </div>
          <div className="ml-[14px] w-[91px] flex flex-col gap-[3px]">
            <PushButton className="border border-[#adadad] pr-[2px]">Display</PushButton>
            <PushButton className="border border-[#adadad] pr-[3px]">New folder</PushButton>
          </div>
        </div>

        <div className="flex mt-[5px]">
          <div className="w-[236px] pt-px">
            <Group title="Update mode" className="h-[82px] pt-1">
              {UPDATE.map((label, i) => (
                <Option key={label} label={label} type="radio" checked={i === 0} disabled />
              ))}
            </Group>
            <Group title="Overwrite mode" className="h-[101px] pt-1 mt-[6px]">
              {OVERWRITE.map((label, i) => (
                <Option key={label} label={label} type="radio" checked={i === 0} />
              ))}
            </Group>
            <Group title="Miscellaneous" className="h-[82px] pt-[5px] mt-[6px]">
              {MISC.map((label, i) => (
                <Option key={label} label={label} type="checkbox" disabled={i === 0} />
              ))}
            </Group>
            <PushButton className="w-[234px] ml-px mt-2 pr-[3px] border border-[#adadad]">Save settings</PushButton>
          </div>
          <div className="ml-[11px] mt-[6px] w-[246px] h-[304px] border border-[#777] pt-px">
            {TREE.map((node) => (
              <TreeRow key={`${node.level}${node.label}`} {...node} />
            ))}
          </div>
        </div>
      </div>

      <div className="flex justify-end gap-2 pr-[7px] pt-2">
        <PushButton className="w-[73px] pr-[2px] border-2 border-[#0078d7]">OK</PushButton>
        <PushButton className="w-[73px] pr-[2px] border border-[#adadad]">Cancel</PushButton>
        <PushButton className="w-[73px] pr-[2px] border border-[#adadad]">Help</PushButton>
      </div>
    </div>
  );
}

/* ---------- taskbar ---------- */

function Taskbar() {
  return (
    <div className="absolute inset-x-0 bottom-0 h-10 bg-gradient-to-r from-[#00151d] to-[#000717] flex items-center">
      <div className="w-12 flex justify-center">
        <svg width="16" height="16" viewBox="0 0 16 16" fill="#fff">
          <path d="M0 2l6.500-1v6.500H0zM7.500 0.900L16 0v7.500H7.500zM0 8.500h6.500V15L0 14zM7.500 8.500H16V16l-8.500-1z" />
        </svg>
      </div>
      <div className="w-[288px] h-10 bg-[#f0f0f0] border border-[#cfcfcf] flex items-center pl-[11px]">
        <svg width="17" height="17" viewBox="0 0 17 17" fill="none" stroke="#222" strokeWidth="1.300">
          <circle cx="10.500" cy="6.500" r="5.700" />
          <path d="M6.500 10.500L0.500 16.500" />
        </svg>
        <span className="ml-[10px] pt-[2px] text-[13.900px] text-[#3a3a3a]">Type here to search</span>
      </div>
      <div className="w-12 flex justify-center">
        <svg width="17" height="16" viewBox="0 0 17 16" fill="none" stroke="#fff" strokeWidth="1.200">
          <path d="M1 0v3h10V0M1 16v-3h10v3M1 5h10v6H1zM15 0v3M15 7v9" />
          <rect x="14" y="4" width="2" height="2" fill="#fff" />
        </svg>
      </div>
      <div className="w-[49px] h-10 ml-[3px] flex flex-col items-center"><span className="flex-1 flex items-center"><EdgeIcon /></span><span className="h-[2px] w-10 bg-[#76b9ed]" /></div>
      <div className="w-[48px] h-10 flex flex-col items-center"><span className="flex-1 flex items-center"><LibraryIcon size={22} /></span><span className="h-[2px] w-10 bg-[#76b9ed]" /></div>
      <div className="w-[50px] h-10 flex items-center justify-center"><FirefoxIcon /></div>
      <div className="w-[45px] pl-[2px] h-10 bg-[#33454d] flex flex-col items-center"><span className="flex-1 flex items-center"><RarIcon size={24} /></span><span className="h-[2px] w-full -ml-[2px] bg-[#76b9ed]" /></div>
      <div className="w-[3px] h-10 ml-px bg-[#33454d] flex items-end"><span className="h-[2px] w-full bg-[#76b9ed]" /></div>

      <div className="ml-auto flex items-center text-white">
        <svg width="12" height="7" viewBox="0 0 12 7" fill="none" stroke="#fff" strokeWidth="1.200"><path d="M0.500 6.500L6 1l5.500 5.500" /></svg>
        <svg width="12" height="17" viewBox="0 0 12 17" fill="none" stroke="#fff" strokeWidth="1.200" className="ml-[13px]">
          <rect x="1" y="5" width="7" height="7" rx="1" />
          <path d="M8 7.500L11 6v5L8 9.500M2 2q3-2 7 0M2 15q3 2 7 0" />
        </svg>
        <svg width="17" height="14" viewBox="0 0 17 14" fill="none" stroke="#fff" strokeWidth="1.200" className="ml-[9px]">
          <path d="M5 2h11v8H3.500V6M10 10v3M6 13h8" />
          <rect x="0.600" y="1" width="4" height="4" />
        </svg>
        <svg width="17" height="14" viewBox="0 0 17 14" fill="none" stroke="#fff" strokeWidth="1.100" className="ml-[7px]">
          <path d="M0.500 5h3L7 1.500v11L3.500 9h-3zM9.500 5q1.500 2 0 4M11.500 3q3 4 0 8M13.500 1q5 6 0 12" />
        </svg>
        <div className="w-[56px] ml-[7px] pb-px text-[11.400px] leading-[18px] text-center whitespace-nowrap">
          <div>9:56 PM</div>
          <div className="tracking-[-0.250px]">2/19/2025</div>
        </div>
        <svg width="16" height="16" viewBox="0 0 16 16" fill="none" stroke="#fff" strokeWidth="1.200" className="ml-[16px] mr-[20px]">
          <path d="M0.600 1h14.800v11H11l-3 3-3-3H0.600z" />
        </svg>
        <span className="w-px h-10 bg-[#4a5560] mr-1" />
      </div>
    </div>
  );
}

function Watermark() {
  return (
    <div className="absolute left-[1038px] top-[608px] w-[196px] h-[64px] flex items-center text-white font-['Roboto',sans-serif] text-[49px] leading-none drop-shadow-[0_0_2px_rgba(0,0,0,0.4)]">
      <span className="w-[62px] origin-left scale-x-[0.680] whitespace-nowrap">ANY</span>
      <svg width="60" height="64" viewBox="0 0 60 64" fill="none" stroke="#fff" strokeWidth="4" className="ml-[6px] shrink-0">
        <path d="M17 6l36 20-36 21zM17 18l24 14M9 10L6 12v42l6 5 40-27" />
      </svg>
      <span className="w-[62px] ml-px origin-left scale-x-[0.680] whitespace-nowrap">RUN</span>
    </div>
  );
}

export default function App() {
  return (
    <div className="relative w-[1280px] h-[720px] overflow-hidden bg-white font-['Open_Sans','DejaVu_Sans',sans-serif] text-[11.400px] leading-[16px] text-black">
      <Browser />
      <Explorer />
      <WinRar />
      <ExtractDialog />
      <Watermark />
      <Taskbar />
    </div>
  );
}
